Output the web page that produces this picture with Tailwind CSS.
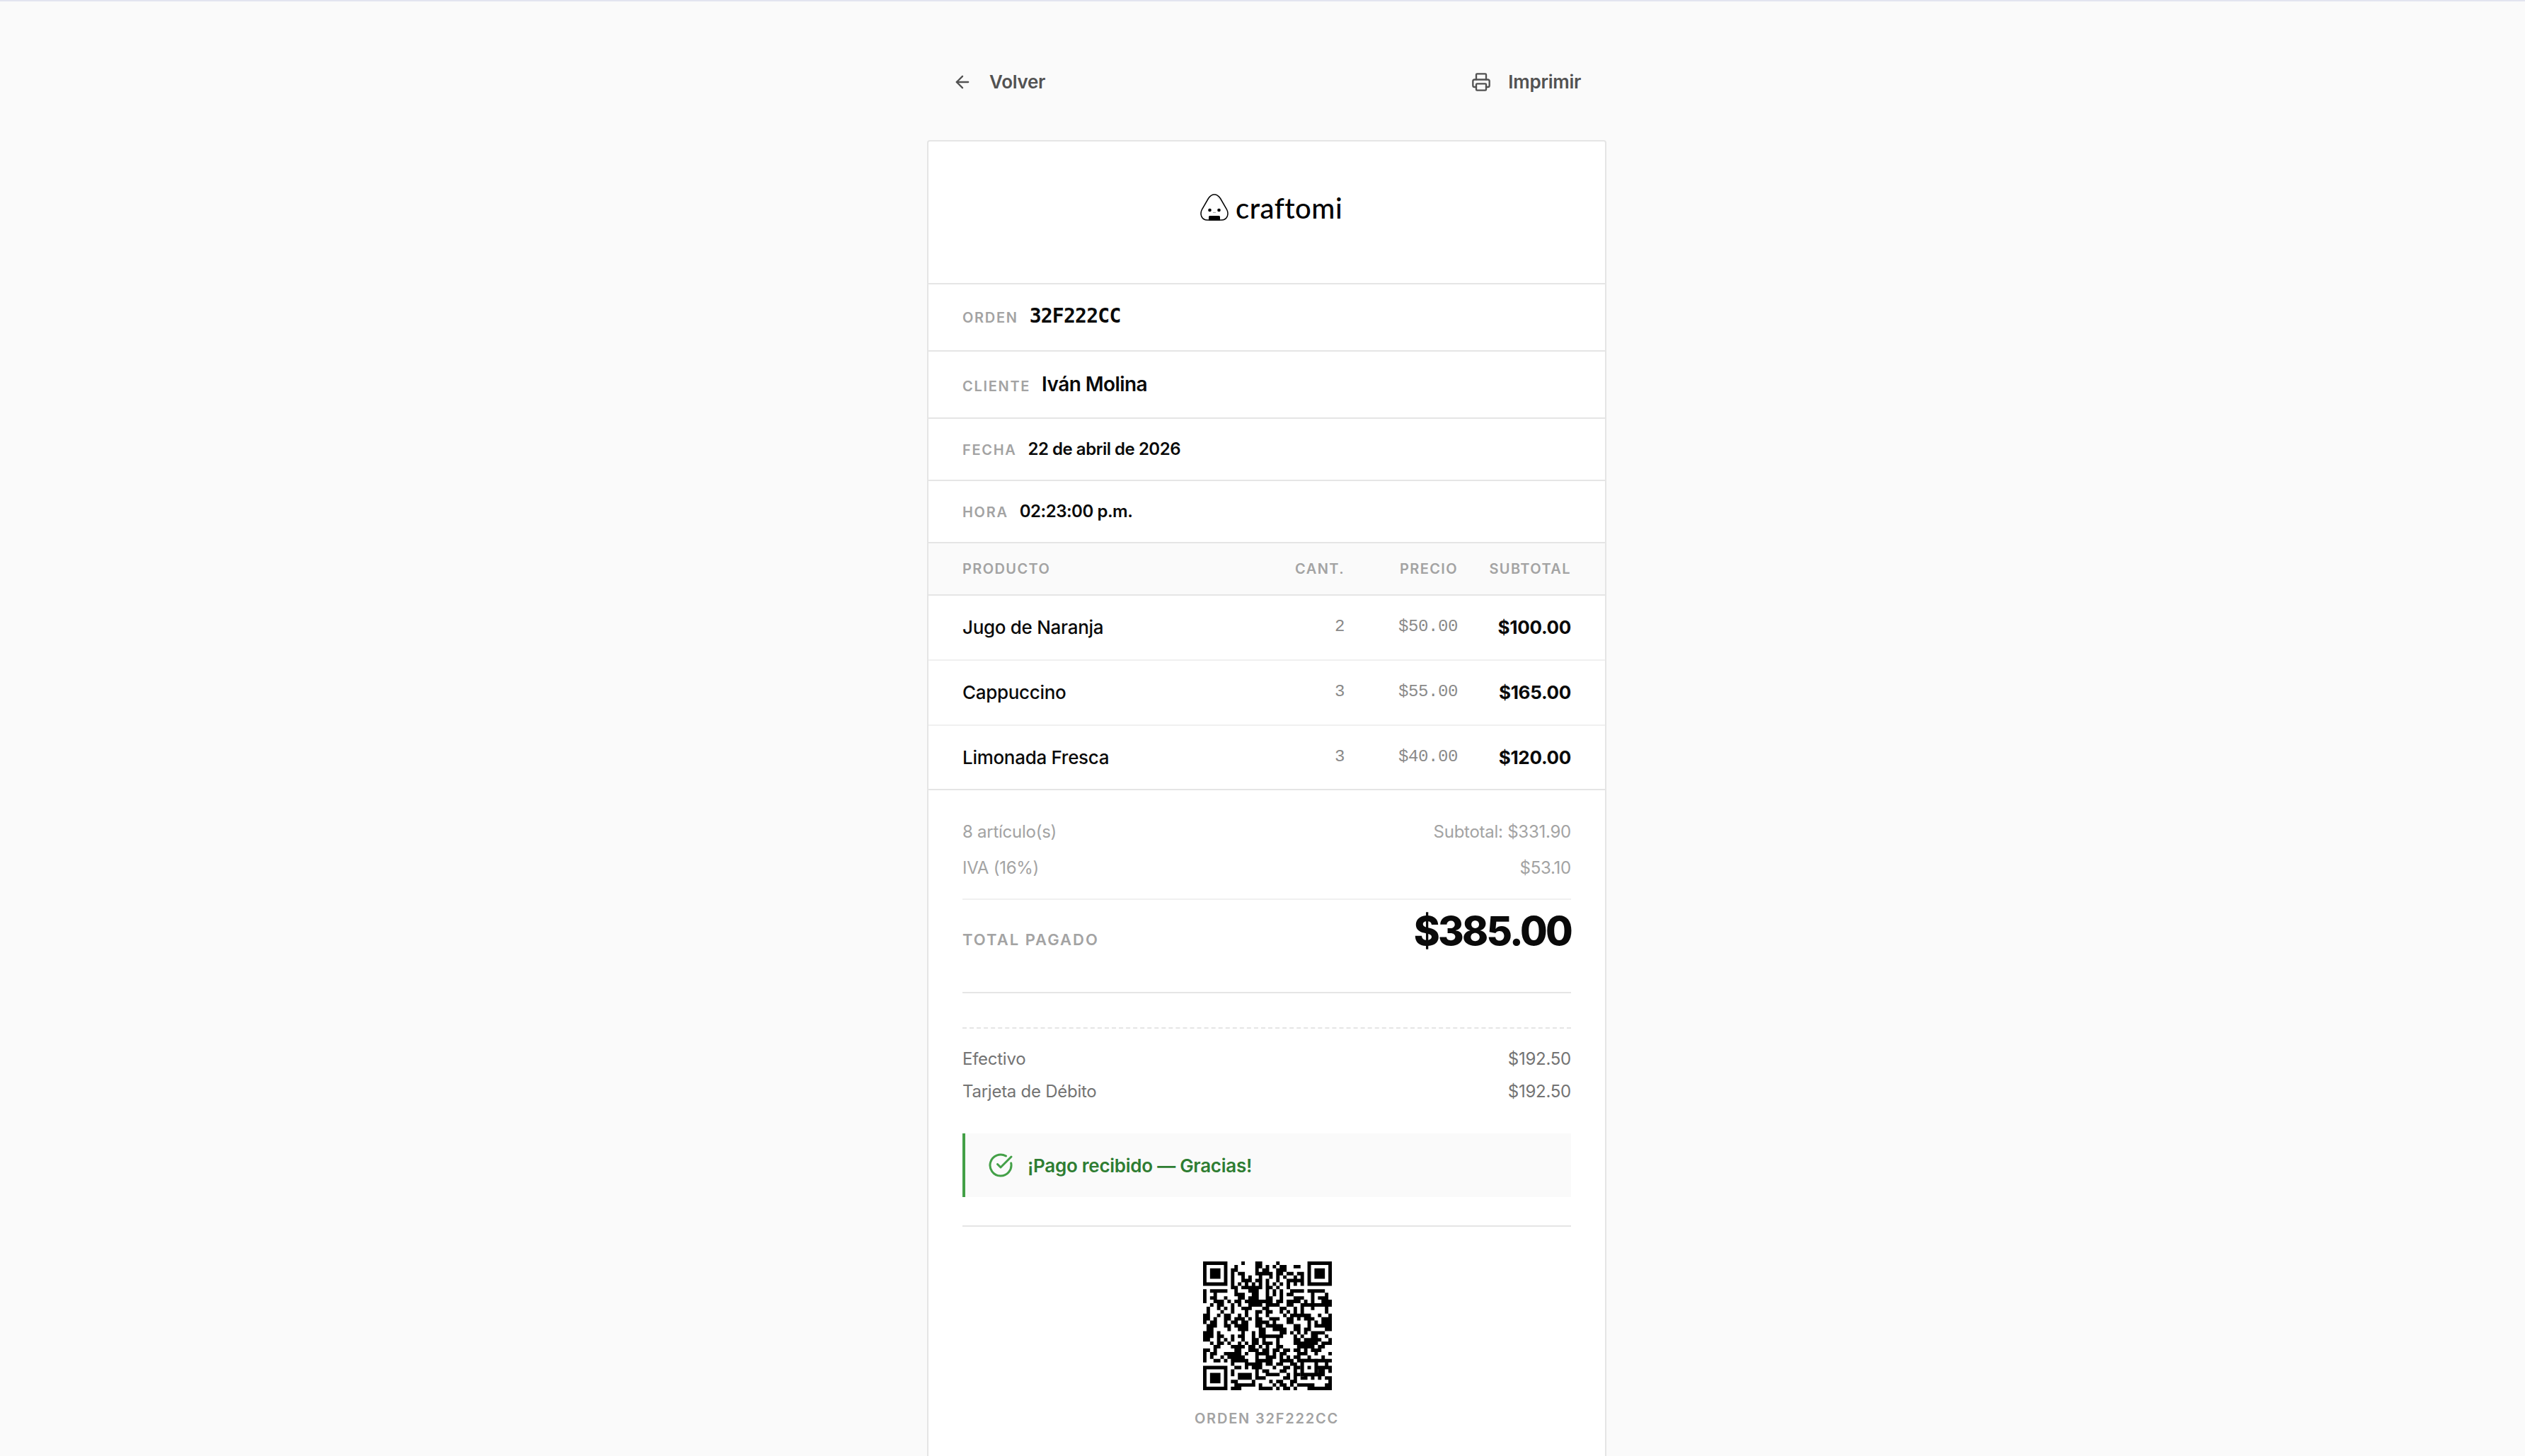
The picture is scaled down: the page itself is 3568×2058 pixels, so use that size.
<!DOCTYPE html>
<html lang="es">
<head>
  <meta charset="utf-8">
  <meta name="viewport" content="width=device-width,initial-scale=1">
  <title>Ticket 32F222CC</title>
  <script src="https://cdn.jsdelivr.net/npm/@tailwindcss/browser@4"></script>
</head>
<body class="h-[2058px] overflow-hidden bg-[#fafafa] border-t-2 border-[#e2e4f0] font-['Inter',sans-serif] text-[#0a0a0a]">

  <main class="w-[960px] ml-[1310px]">

    <!-- ───────── ACTIONS ───────── -->
    <nav class="h-[196px] pt-[88px] px-[36px] flex justify-between items-start text-[26px] leading-[52px] font-semibold tracking-[-0.26px] text-[#525252]">
      <button class="flex items-center gap-[24px] h-[52px]">
        <svg class="w-[28px] h-[28px]" viewBox="0 0 24 24" fill="none" stroke="currentColor" stroke-width="2" stroke-linecap="round" stroke-linejoin="round"><path d="m12 19-7-7 7-7"/><path d="M19 12H5"/></svg>
        Volver
      </button>
      <button class="flex items-center gap-[24px] h-[52px]">
        <svg class="w-[28px] h-[28px]" viewBox="0 0 24 24" fill="none" stroke="currentColor" stroke-width="2" stroke-linecap="round" stroke-linejoin="round"><path d="M6 18H4a2 2 0 0 1-2-2v-5a2 2 0 0 1 2-2h16a2 2 0 0 1 2 2v5a2 2 0 0 1-2 2h-2"/><path d="M6 9V3a1 1 0 0 1 1-1h10a1 1 0 0 1 1 1v6"/><rect x="6" y="14" width="12" height="8" rx="1"/></svg>
        Imprimir
      </button>
    </nav>

    <!-- ───────── RECEIPT ───────── -->
    <article class="h-[1900px] bg-white border-2 border-[#e5e5e5] rounded-[4px]">

      <header class="h-[202px] border-b-2 border-[#e5e5e5] flex pl-[384px] pt-[74px]">
        <svg class="w-[40px] h-[38px] shrink-0" viewBox="0 0 40 38" fill="none">
          <path d="M20 1C15.500 1 13.500 3.500 11.500 6.500L2.500 22C-1 29 2 37 10 37h20c8 0 11-8 7.500-15L28.500 6.500C26.500 3.500 24.500 1 20 1z" stroke="#000" stroke-width="1.5"/>
          <path d="M12 37.500v-5a1.500 1.500 0 0 1 1.500-1.500h13a1.500 1.500 0 0 1 1.500 1.500v5z" fill="#000"/>
          <circle cx="13.500" cy="23" r="2.300" fill="#000"/>
          <circle cx="26.500" cy="23" r="2.300" fill="#000"/>
          <path d="M18 26q1 1.500 2 0q1 1.500 2 0" stroke="#777" stroke-width=".7"/>
          <path d="M24 4l4 5" stroke="#bbb" stroke-width=".8" stroke-dasharray="1.500 1"/>
        </svg>
        <span class="ml-[10px] font-['Lato',sans-serif] text-[40px] leading-[40px] tracking-[0.5px] font-medium text-black">craftomi</span>
      </header>

      <div class="h-[95px] pl-[48px] pt-[24px] border-b-2 border-[#e5e5e5] flex items-baseline gap-[16px]">
        <span class="text-[20px] font-semibold tracking-[1.7px] text-[#a3a3a3]">ORDEN</span>
        <span class="font-['DejaVu_Sans_Mono',monospace] text-[28px] leading-[42px] font-bold tracking-[-0.75px]">32F222CC</span>
      </div>
      <div class="h-[95px] pl-[48px] pt-[24px] border-b-2 border-[#e5e5e5] flex items-baseline gap-[16px]">
        <span class="text-[20px] font-semibold tracking-[1.7px] text-[#a3a3a3]">CLIENTE</span>
        <span class="text-[28px] leading-[44px] font-semibold tracking-[-0.56px]">Iván Molina</span>
      </div>
      <div class="h-[88px] pl-[48px] pt-[24px] border-b-2 border-[#e5e5e5] flex items-baseline gap-[16px]">
        <span class="text-[20px] font-semibold tracking-[1.7px] text-[#a3a3a3]">FECHA</span>
        <span class="text-[24px] leading-[37px] font-semibold tracking-[-0.48px]">22 de abril de 2026</span>
      </div>
      <div class="h-[88px] pl-[48px] pt-[24px] border-b-2 border-[#e5e5e5] flex items-baseline gap-[16px]">
        <span class="text-[20px] font-semibold tracking-[1.7px] text-[#a3a3a3]">HORA</span>
        <span class="text-[24px] leading-[37px] font-semibold tracking-[-0.48px]">02:23:00 p.m.</span>
      </div>

      <!-- items -->
      <div class="h-[74px] px-[48px] pb-[1px] bg-[#fafafa] border-b-2 border-[#e5e5e5] grid grid-cols-[440px_100px_160px_160px] items-center text-right text-[20px] font-semibold tracking-[1.4px] text-[#a3a3a3]">
        <span class="text-left">PRODUCTO</span><span>CANT.</span><span>PRECIO</span><span>SUBTOTAL</span>
      </div>
      <div class="h-[92px] px-[48px] pb-[2px] border-b-2 border-[#f0f0f0] grid grid-cols-[440px_100px_160px_160px] items-center text-right text-[26px] tracking-[-0.3px]">
        <span class="text-left font-medium">Jugo de Naranja</span><span class="font-['Liberation_Mono',monospace] text-[24px] tracking-[-0.4px] text-[#8a8a8a]">2</span><span class="font-['Liberation_Mono',monospace] text-[24px] tracking-[-0.4px] text-[#8a8a8a]">$50.00</span><span class="font-bold">$100.00</span>
      </div>
      <div class="h-[92px] px-[48px] pb-[2px] border-b-2 border-[#f0f0f0] grid grid-cols-[440px_100px_160px_160px] items-center text-right text-[26px] tracking-[-0.3px]">
        <span class="text-left font-medium">Cappuccino</span><span class="font-['Liberation_Mono',monospace] text-[24px] tracking-[-0.4px] text-[#8a8a8a]">3</span><span class="font-['Liberation_Mono',monospace] text-[24px] tracking-[-0.4px] text-[#8a8a8a]">$55.00</span><span class="font-bold">$165.00</span>
      </div>
      <div class="h-[91px] px-[48px] pb-[1px] border-b-2 border-[#e5e5e5] grid grid-cols-[440px_100px_160px_160px] items-center text-right text-[26px] tracking-[-0.3px]">
        <span class="text-left font-medium">Limonada Fresca</span><span class="font-['Liberation_Mono',monospace] text-[24px] tracking-[-0.4px] text-[#8a8a8a]">3</span><span class="font-['Liberation_Mono',monospace] text-[24px] tracking-[-0.4px] text-[#8a8a8a]">$40.00</span><span class="font-bold">$120.00</span>
      </div>

      <!-- totals -->
      <section class="mx-[48px] h-[287px] pt-[39px] border-b-2 border-[#e5e5e5]">
        <div class="h-[39px] flex justify-between text-[24px] leading-[39px] tracking-[-0.26px] text-[#a3a3a3]"><span>8 artículo(s)</span><span>Subtotal: $331.90</span></div>
        <div class="mt-[12px] h-[39px] flex justify-between text-[24px] leading-[39px] tracking-[-0.26px] text-[#a3a3a3]"><span>IVA (16%)</span><span>$53.10</span></div>
        <div class="mt-[24px] pt-[16px] border-t-2 border-[#f0f0f0] flex justify-between items-baseline">
          <span class="text-[22px] font-semibold tracking-[2px] text-[#a3a3a3]">TOTAL PAGADO</span>
          <span class="text-[56px] leading-[56px] font-extrabold tracking-[-2.8px]">$385.00</span>
        </div>
      </section>

      <!-- payments -->
      <section class="mx-[48px] mt-[48px] pt-[24px] border-t-2 border-dashed border-[#e5e5e5] text-[24px] leading-[38px] tracking-[-0.26px] text-[#737373]">
        <div class="h-[38px] flex justify-between"><span>Efectivo</span><span>$192.50</span></div>
        <div class="h-[38px] mt-[8px] flex justify-between"><span>Tarjeta de Débito</span><span>$192.50</span></div>
      </section>

      <div class="mx-[48px] mt-[40px] h-[90px] pl-[32px] bg-[#fafafa] border-l-4 border-[#43a047] flex items-center gap-[20px] text-[26px] font-semibold tracking-[-0.27px] text-[#2e7d32]">
        <svg class="w-[36px] h-[36px]" viewBox="0 0 24 24" fill="none" stroke="#43a047" stroke-width="2" stroke-linecap="round" stroke-linejoin="round"><path d="M21.801 10A10 10 0 1 1 17 3.335"/><path d="m9 11 3 3L22 4"/></svg>
        ¡Pago recibido — Gracias!
      </div>

      <!-- qr -->
      <footer class="mx-[48px] mt-[40px] pt-[49px] border-t-2 border-[#e5e5e5] flex flex-col items-center">
        <svg id="qr" class="w-[182px] h-[182px] ml-[2px]" viewBox="0 0 37 37" shape-rendering="geometricPrecision"></svg>
        <p class="mt-[24px] text-[20px] leading-[32px] font-semibold tracking-[1.8px] text-[#a3a3a3]">ORDEN 32F222CC</p>
      </footer>
    </article>
  </main>

  <script>
/* one string per QR row, # = dark module */
const QR = [
  '#######....#...##....#........#######',
  '#.....#..#.....##.#.#.##..##..#.....#',
  '#.###.#.##.....#.##..###......#.###.#',
  '#.###.#.#.##...#####.##.##.##.#.###.#',
  '#.###.#.#..#.#..#..#.#.#..#.#.#.###.#',
  '#.....#.#..###.##.#..#..#####.#.....#',
  '#######.#.#.#.#.#.#.#.#.#.#.#.#######',
  '........##.######.##.#..#............',
  '#.#####..#...###..#.#.#..####.#####..',
  '#..#.....###..##..#.#.#.##.....#...#.',
  '#.##..#...##.###..##..#...###..#.###.',
  '#..###.#.##.########.##.####.#.#..###',
  '..#.##..#.#..####.####..##..#########',
  '.#..#.#.#..###...##...##..#.#..#...#.',
  '.#...#..#...#..##.##..#.#.#.#......#.',
  '##..#.##..#.#..#..#....#.######..#..#',
  '##.#..##.###.#.##..###..##.#.###..###',
  '#.##..#.##.##..####.#...##....#.#.###',
  '.###..##.####..##.#####...##..#.#####',
  '.##....#..###...##..####..##.##....##',
  '###.#......#..#.##....##.#.#.#.####..',
  '###.##..#.##..#.#######...#.#..##..#.',
  '##..#.#.#..#..##.#...#....##.#####..#',
  '..#.##.#..#.#.##.###.#....#######.###',
  '...##...####.##.#.#..##....#####.##..',
  '##.#.....##..###.##.##.##.##.#.###...',
  '#.##..#####.#..####.#.##...###..#...#',
  '#.#..#.#####...#..###.#.#.##..#...#..',
  '#..##.#.#####..#####..####.####.#####',
  '........#...#####.##.##..##.#####..#.',
  '#######..##.#.###...#..##.##...######',
  '#.....#.#......#.##...##..#.#.#..##.#',
  '#.###.#.#.####.#..####..#.##.######..',
  '#.###.#...####.###.....##.#.##.#.#.##',
  '#.###.#.##....#....#.##..##.........#',
  '#.....#..######.#...#.##.#.#####...##',
  '#######.###.....####.#.##.#...#######'
];

const qr = document.querySelector('#qr');
let d = '';
QR.forEach((row, y) => {
  for (const m of row.matchAll(/#+/g)) d += `M${m.index} ${y}h${m[0].length}v1h-${m[0].length}z`;
});
qr.innerHTML = `<path d="${d}" fill="#000"/>`;
// alignment pattern
qr.innerHTML += '<path d="M28 28h5v5h-5z" fill="#000"/><path d="M29 29h3v3h-3z" fill="#fff"/><path d="M30 30h1v1h-1z" fill="#000"/>';
  </script>
</body>
</html>
